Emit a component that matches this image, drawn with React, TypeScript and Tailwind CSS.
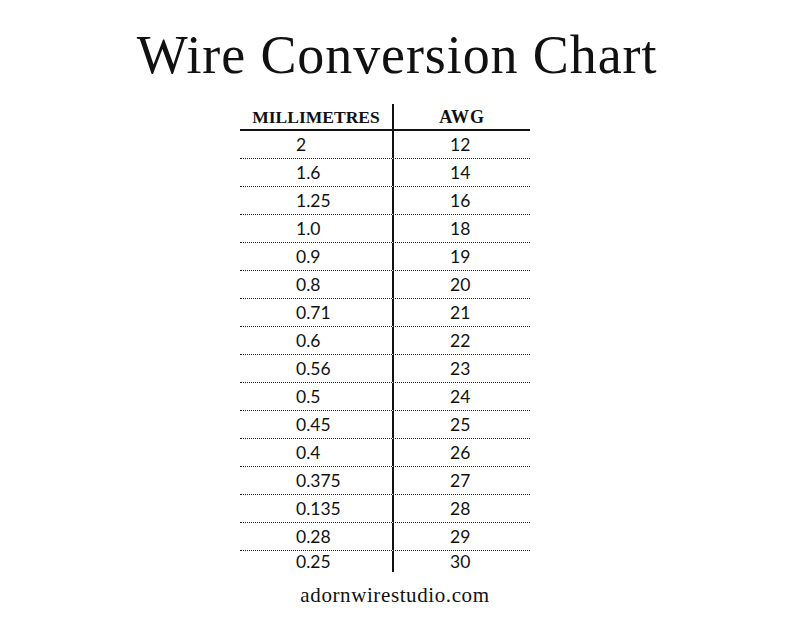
const ROWS: [string, string][] = [
  ["2", "12"],
  ["1.6", "14"],
  ["1.25", "16"],
  ["1.0", "18"],
  ["0.9", "19"],
  ["0.8", "20"],
  ["0.71", "21"],
  ["0.6", "22"],
  ["0.56", "23"],
  ["0.5", "24"],
  ["0.45", "25"],
  ["0.4", "26"],
  ["0.375", "27"],
  ["0.135", "28"],
  ["0.28", "29"],
  ["0.25", "30"],
];

export default function App() {
  return (
    <div className="w-[794px] h-[635px] bg-white text-[#111] flex flex-col items-center overflow-hidden">
      <h1 className="mt-[28px] text-[54px] leading-[54px] tracking-[0.9px] font-['Liberation_Serif',serif]">
        Wire Conversion Chart
      </h1>

      {/* Table */}
      <div className="mt-[22px] mr-[24px] w-[290px] flex flex-col">
        <div className="flex h-[27px] border-b-2 border-[#111]">
          <div className="w-[154px] border-r-2 border-[#111] text-center pt-[3px] text-[17.5px] leading-[20px] font-bold font-['Liberation_Serif',serif]">
            MILLIMETRES
          </div>
          <div className="flex-1 text-center pt-[3px] text-[18px] leading-[20px] font-bold tracking-[0.8px] font-['Liberation_Serif',serif]">
            AWG
          </div>
        </div>
        {ROWS.map(([mm, awg], i) => {
          const last = i === ROWS.length - 1;
          return (
            <div
              key={mm + awg}
              className={
                last
                  ? "flex h-[21px] font-['Lato',sans-serif] text-[17.5px] leading-[20px]"
                  : "flex h-[28px] border-b border-dotted border-[#222] font-['Lato',sans-serif] text-[17.5px] leading-[20px]"
              }
            >
              <div className="w-[154px] border-r-2 border-[#111] pl-[56px] flex items-center">
                {mm}
              </div>
              <div className="flex-1 pl-[56px] flex items-center">{awg}</div>
            </div>
          );
        })}
      </div>

      <div className="mt-[13px] mr-[4px] text-[21px] leading-[21px] tracking-[0.6px] font-['Liberation_Serif',serif]">
        adornwirestudio.com
      </div>
    </div>
  );
}
